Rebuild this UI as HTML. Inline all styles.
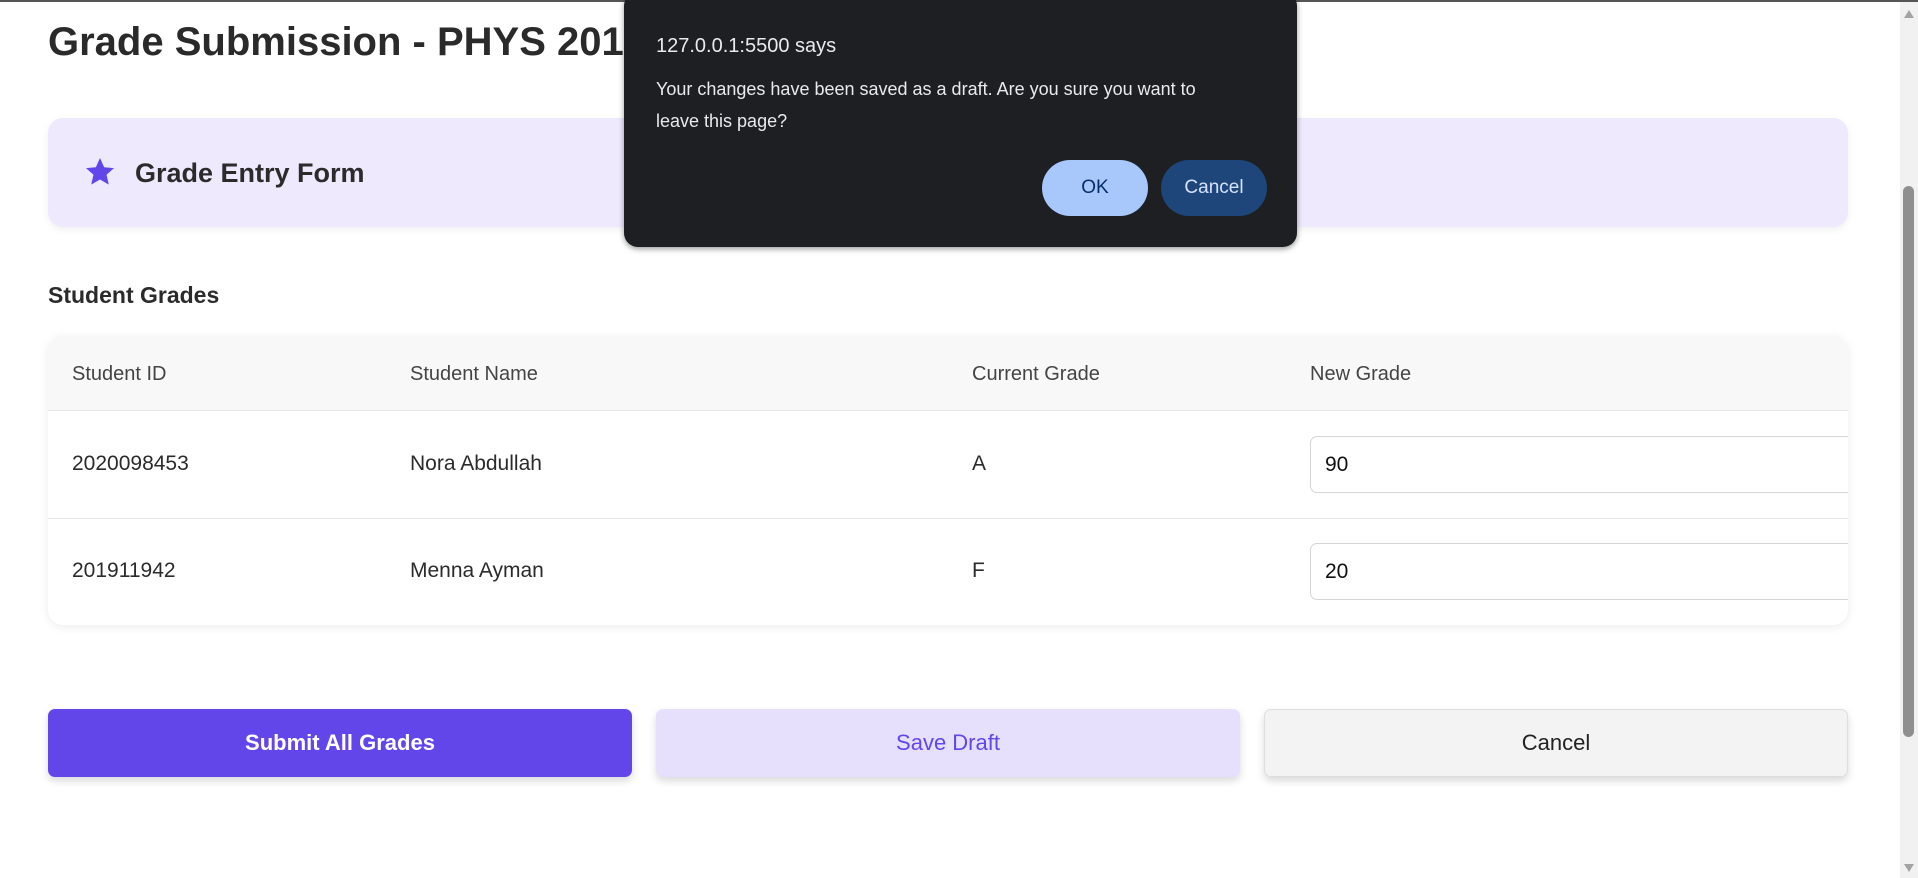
<!DOCTYPE html>
<html><head><meta charset="utf-8"><style>
*{box-sizing:border-box;margin:0;padding:0}
body{width:1918px;height:876px;overflow:hidden;background:#fff;font-family:"Liberation Sans",sans-serif;color:#2b2b2b;position:relative;border-top:2px solid #555}
.abs{position:absolute}
h1{position:absolute;left:48px;top:18px;font-size:40px;font-weight:700;color:#2a2a2a;white-space:nowrap}
.card{left:48px;top:116px;width:1800px;height:109px;background:#efe9fe;border-radius:15px;box-shadow:0 3px 8px rgba(0,0,0,.06)}
.card .t{position:absolute;left:87px;top:40px;font-size:27px;font-weight:700}
.sg{left:48px;top:280px;font-size:23px;font-weight:700}
.tbl{left:48px;top:334px;width:1800px;height:289px;border-radius:15px;box-shadow:0 2px 10px rgba(0,0,0,.08);overflow:hidden;background:#fff}
.hdr{position:absolute;left:0;top:0;width:100%;height:75px;background:#f8f8f8;border-bottom:1px solid #e6e6e6}
.row2{position:absolute;left:0;top:182px;width:100%;border-top:1px solid #e6e6e6}
.c{position:absolute;font-size:21px;white-space:nowrap}
.h{color:#444;font-size:20px}
.inp{position:absolute;left:1262px;width:560px;height:57px;border:1px solid #d5d5d5;border-radius:7px;background:#fff;font-size:21px;padding:16px 0 0 14px;color:#111}
.btn{top:707px;height:68px;width:584px;border-radius:7px;font-size:22px;font-weight:700;display:flex;align-items:center;justify-content:center;box-shadow:0 4px 8px rgba(0,0,0,.15)}
.dlg{left:624px;top:-10px;width:673px;height:255px;background:#1d1f23;border-radius:14px;box-shadow:0 2px 6px rgba(0,0,0,.4);color:#e8eaed}
.pb{position:absolute;top:168px;width:106px;height:56px;border-radius:28px;font-size:19px;display:flex;align-items:center;justify-content:center}
</style></head><body>
<h1>Grade Submission - PHYS 201</h1>
<div class="abs card">
<svg class="abs" style="left:36px;top:38px" width="32" height="32" viewBox="0 0 24 24"><path fill="#6246ea" d="M12 1.5l3.1 6.9 7.4.7-5.6 5 1.7 7.4L12 17.6l-6.6 3.9 1.7-7.4-5.6-5 7.4-.7z"/></svg>
<div class="t">Grade Entry Form</div></div>
<div class="abs sg">Student Grades</div>
<div class="abs tbl">
<div class="hdr"></div>
<div class="row2"></div>
<div class="c h" style="left:24px;top:27px">Student ID</div>
<div class="c h" style="left:362px;top:27px">Student Name</div>
<div class="c h" style="left:924px;top:27px">Current Grade</div>
<div class="c h" style="left:1262px;top:27px">New Grade</div>
<div class="c" style="left:24px;top:116px">2020098453</div>
<div class="c" style="left:362px;top:116px">Nora Abdullah</div>
<div class="c" style="left:924px;top:116px">A</div>
<div class="inp" style="top:100px">90</div>
<div class="c" style="left:24px;top:223px">201911942</div>
<div class="c" style="left:362px;top:223px">Menna Ayman</div>
<div class="c" style="left:924px;top:223px">F</div>
<div class="inp" style="top:207px">20</div>
</div>
<div class="abs btn" style="left:48px;background:#6246ea;color:#fff">Submit All Grades</div>
<div class="abs btn" style="left:656px;background:#e6e0fd;color:#6246ea;font-weight:400">Save Draft</div>
<div class="abs btn" style="left:1264px;background:#f3f3f3;color:#222;font-weight:400;border:1px solid #ddd">Cancel</div>
<div class="abs" style="left:1900px;top:0;width:18px;height:876px;background:#f1f1f1"></div>
<div class="abs" style="left:1903px;top:184px;width:11px;height:551px;background:#8f8f8f;border-radius:6px"></div>
<div class="abs" style="left:1904px;top:8px;width:0;height:0;border-left:5px solid transparent;border-right:5px solid transparent;border-bottom:8px solid #a3a3a3"></div>
<div class="abs" style="left:1904px;top:862px;width:0;height:0;border-left:5px solid transparent;border-right:5px solid transparent;border-top:8px solid #a3a3a3"></div>
<div class="abs dlg">
<div class="abs" style="left:32px;top:43px;font-size:20px">127.0.0.1:5500 says</div>
<div class="abs" style="left:32px;top:81px;width:585px;font-size:18px;line-height:32px">Your changes have been saved as a draft. Are you sure you want to leave this page?</div>
<div class="pb" style="left:418px;background:#a8c7fa;color:#062e6f">OK</div>
<div class="pb" style="left:537px;background:#1f467a;color:#d3e3fd">Cancel</div>
</div>
</body></html>
